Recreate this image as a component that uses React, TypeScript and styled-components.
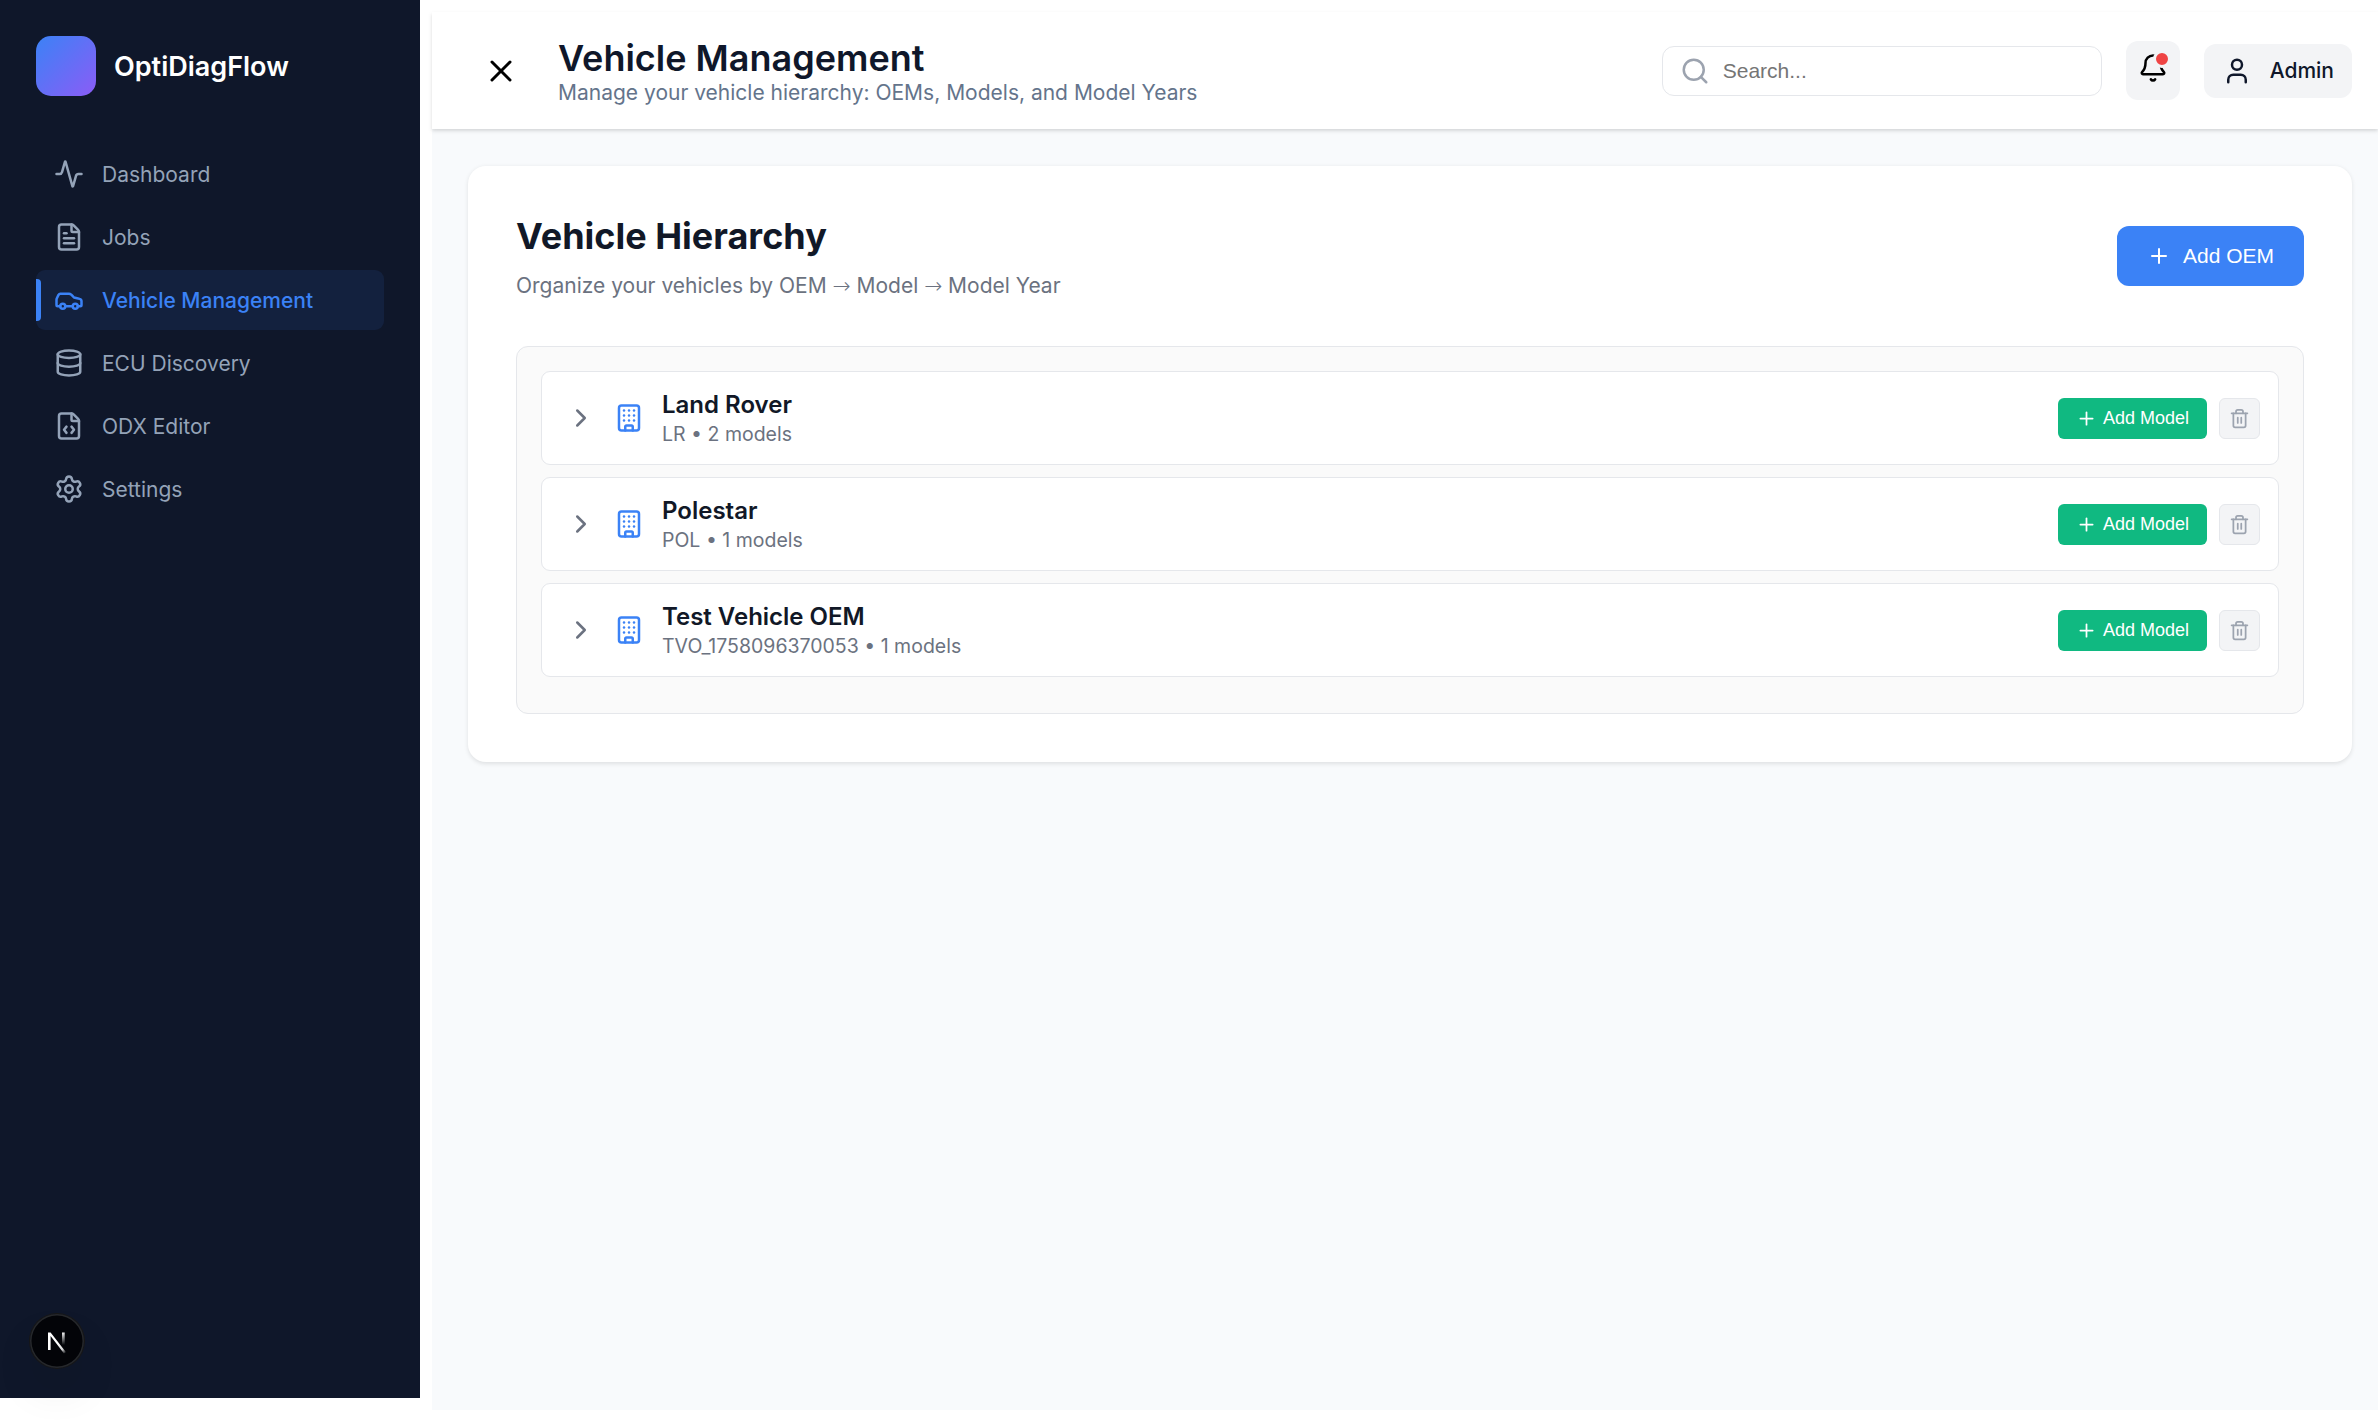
import React from "react";
import styled, { createGlobalStyle, css } from "styled-components";
import {
  Activity,
  Bell,
  Building,
  Car,
  ChevronRight,
  Database,
  FileCode,
  FileText,
  Plus,
  Search,
  Settings,
  Trash2,
  User,
  X,
} from "lucide-react";
import type { LucideIcon } from "lucide-react";

const sans = '"Inter", "Liberation Sans", sans-serif';
const control = '"Liberation Sans", Arial, sans-serif';

const GlobalStyle = createGlobalStyle`
  *, *::before, *::after { box-sizing: border-box; }
  body {
    margin: 0;
    padding: 12px 0 0;
    background: #fff;
    font-family: ${sans};
    overflow: hidden;
  }
  h1, h2, h3, p { margin: 0; }
  button { border: 0; margin: 0; cursor: pointer; }
  svg { flex-shrink: 0; }
`;

const Page = styled.div`
  display: flex;
  gap: 12px;
  height: 1398px;
  width: 2378px;
`;

const Sidebar = styled.aside`
  width: 420px;
  height: 1398px;
  flex-shrink: 0;
  margin-top: -12px;
  padding: 36px;
  background: #0f172a;
`;

const Brand = styled.div`
  display: flex;
  align-items: center;
  gap: 18px;
  margin-bottom: 48px;
`;

const BrandMark = styled.div`
  width: 60px;
  height: 60px;
  border-radius: 15px;
  background: linear-gradient(135deg, #3b82f6 0%, #8b5cf6 100%);
`;

const BrandName = styled.span`
  color: #fff;
  font-size: 27px;
  font-weight: 600;
  line-height: 33px;
`;

const Nav = styled.nav`
  display: flex;
  flex-direction: column;
  gap: 3px;
`;

const NavLabel = styled.span`
  padding-top: 2px;
`;

const NavItem = styled.a<{ $active?: boolean }>`
  position: relative;
  display: flex;
  align-items: center;
  gap: 18px;
  width: 348px;
  height: 60px;
  padding: 0 18px;
  border-radius: 9px;
  color: #94a3b8;
  font-size: 21px;
  line-height: 26px;
  ${({ $active }) =>
    $active &&
    css`
      background: rgba(59, 130, 246, 0.1);
      color: #3b82f6;
      font-weight: 500;
      &::before {
        content: "";
        position: absolute;
        left: 0;
        top: 9px;
        width: 5px;
        height: 42px;
        border-radius: 0 4px 4px 0;
        background: #3b82f6;
      }
    `}
`;

const Main = styled.main`
  display: flex;
  flex-direction: column;
  flex: 1;
  min-width: 0;
  background: #f8fafc;
`;

const Header = styled.header`
  display: flex;
  align-items: center;
  height: 117px;
  padding: 0 26px 0 36px;
  background: #fff;
  box-shadow: 0 1.5px 4.5px rgba(0, 0, 0, 0.1), 0 1.5px 3px rgba(0, 0, 0, 0.06);
  z-index: 1;
`;

const CloseButton = styled.button`
  display: flex;
  padding: 15px;
  margin-right: 24px;
  background: transparent;
  color: #000;
`;

const HeaderTitles = styled.div`
  flex: 1;
  padding-top: 2px;
`;

const PageTitle = styled.h1`
  color: #0f172a;
  font-size: 36px;
  font-weight: 600;
  line-height: 43px;
`;

const PageSubtitle = styled.p`
  color: #64748b;
  font-size: 21px;
  line-height: 26px;
`;

const HeaderTools = styled.div`
  display: flex;
  align-items: center;
  gap: 24px;
`;

const SearchBox = styled.label`
  display: flex;
  align-items: center;
  gap: 13px;
  width: 440px;
  height: 50px;
  padding: 0 17px;
  border: 1px solid #e5e7eb;
  border-radius: 12px;
  color: #9ca3af;
`;

const SearchInput = styled.input`
  flex: 1;
  min-width: 0;
  padding: 0;
  border: 0;
  outline: 0;
  background: transparent;
  font: 21px ${control};
  &::placeholder {
    color: #757575;
  }
`;

const BellButton = styled.button`
  position: relative;
  display: flex;
  width: 54px;
  height: 59px;
  padding: 12px;
  border-radius: 12px;
  background: #f3f4f6;
  color: #000;
`;

const BellDot = styled.span`
  position: absolute;
  top: 9px;
  right: 9px;
  width: 18px;
  height: 18px;
  border: 3px solid #f3f4f6;
  border-radius: 50%;
  background: #ef4444;
`;

const UserButton = styled.button`
  display: flex;
  align-items: center;
  gap: 18px;
  height: 54px;
  padding: 0 18px;
  border-radius: 12px;
  background: #f3f4f6;
  color: #0f172a;
  font: 500 21px ${sans};
`;

const Content = styled.div`
  padding: 37px 26px 36px 36px;
`;

const Card = styled.section`
  padding: 48px;
  border-radius: 18px;
  background: #fff;
  box-shadow: 0 1.5px 4.5px rgba(0, 0, 0, 0.1);
`;

const CardHeader = styled.div`
  display: flex;
  align-items: center;
  justify-content: space-between;
  height: 84px;
  margin-bottom: 48px;
`;

const CardTitle = styled.h2`
  color: #111827;
  font-size: 36px;
  font-weight: 700;
  line-height: 44px;
  margin-bottom: 15px;
`;

const CardSubtitle = styled.p`
  color: #6b7280;
  font-size: 21px;
  line-height: 26px;
`;

const Arrow = styled.span`
  font-family: "DejaVu Sans", sans-serif;
  font-size: 21.5px;
  font-weight: 200;
  line-height: 1;
`;

const PrimaryButton = styled.button`
  display: flex;
  align-items: center;
  gap: 12px;
  height: 60px;
  padding: 0 30px;
  border-radius: 12px;
  background: #3b82f6;
  color: #fff;
  font: 500 21px ${control};
`;

const Tree = styled.div`
  display: flex;
  flex-direction: column;
  gap: 12px;
  padding: 24px 24px 36px;
  border: 1px solid #e5e7eb;
  border-radius: 12px;
  background: #fafafa;
`;

const TreeRow = styled.div`
  display: flex;
  align-items: center;
  gap: 18px;
  height: 94px;
  padding: 0 18px 0 24px;
  border: 1px solid #e5e7eb;
  border-radius: 9px;
  background: #fff;
`;

const RowText = styled.div`
  flex: 1;
`;

const RowName = styled.h3`
  color: #111827;
  font-size: 24px;
  font-weight: 600;
  line-height: 29px;
`;

const RowMeta = styled.p`
  margin-top: 3px;
  color: #6b7280;
  font-size: 19.5px;
  line-height: 24px;
`;

const RowActions = styled.div`
  display: flex;
  gap: 12px;
`;

const AddModelButton = styled.button`
  display: flex;
  align-items: center;
  gap: 6px;
  height: 41px;
  padding: 0 18px;
  border-radius: 6px;
  background: #10b981;
  color: #fff;
  font: 18px ${control};
`;

const DeleteButton = styled.button`
  display: flex;
  align-items: center;
  justify-content: center;
  width: 41px;
  height: 41px;
  padding: 0;
  border: 1px solid #e5e7eb;
  border-radius: 6px;
  background: #f3f4f6;
  color: #9ca3af;
`;

const DevBadge = styled.div`
  position: fixed;
  left: 30px;
  top: 1314px;
  width: 54px;
  height: 54px;
  border-radius: 50%;
  background: rgba(0, 0, 0, 0.8);
  box-shadow: 0 0 0 1px #171717, inset 0 0 0 1.5px rgba(255, 255, 255, 0.14),
    0 24px 48px -12px rgba(0, 0, 0, 0.24);
  z-index: 2;
`;

const navItems: { label: string; icon: LucideIcon; active?: boolean }[] = [
  { label: "Dashboard", icon: Activity },
  { label: "Jobs", icon: FileText },
  { label: "Vehicle Management", icon: Car, active: true },
  { label: "ECU Discovery", icon: Database },
  { label: "ODX Editor", icon: FileCode },
  { label: "Settings", icon: Settings },
];

const oems = [
  { name: "Land Rover", code: "LR", models: 2 },
  { name: "Polestar", code: "POL", models: 1 },
  { name: "Test Vehicle OEM", code: "TVO_1758096370053", models: 1 },
];

function NextMark() {
  return (
    <svg width="54" height="54" viewBox="0 0 54 54" fill="none">
      <defs>
        <linearGradient id="diag" x1="28" y1="29" x2="36" y2="39" gradientUnits="userSpaceOnUse">
          <stop stopColor="#fff" />
          <stop offset="0.6" stopColor="#fff" stopOpacity="0.85" />
          <stop offset="1" stopColor="#fff" stopOpacity="0" />
        </linearGradient>
        <linearGradient id="stem" x1="33" y1="18" x2="33" y2="31" gradientUnits="userSpaceOnUse">
          <stop stopColor="#fff" />
          <stop offset="1" stopColor="#fff" stopOpacity="0" />
        </linearGradient>
      </defs>
      <path d="M18 36V18.5H20.6L36 38.2L34 39.6L20.6 22V36Z" fill="url(#diag)" />
      <rect x="32" y="18.5" width="2.7" height="13" fill="url(#stem)" />
    </svg>
  );
}

export default function App() {
  return (
    <>
      <GlobalStyle />
      <Page>
        <Sidebar>
          <Brand>
            <BrandMark />
            <BrandName>OptiDiagFlow</BrandName>
          </Brand>
          <Nav>
            {navItems.map(({ label, icon: Icon, active }) => (
              <NavItem key={label} $active={active}>
                <Icon size={30} />
                <NavLabel>{label}</NavLabel>
              </NavItem>
            ))}
          </Nav>
        </Sidebar>
        <Main>
          <Header>
            <CloseButton aria-label="Close menu">
              <X size={36} />
            </CloseButton>
            <HeaderTitles>
              <PageTitle>Vehicle Management</PageTitle>
              <PageSubtitle>Manage your vehicle hierarchy: OEMs, Models, and Model Years</PageSubtitle>
            </HeaderTitles>
            <HeaderTools>
              <SearchBox>
                <Search size={30} />
                <SearchInput placeholder="Search..." />
              </SearchBox>
              <BellButton aria-label="Notifications">
                <Bell size={30} />
                <BellDot />
              </BellButton>
              <UserButton>
                <User size={30} />
                Admin
              </UserButton>
            </HeaderTools>
          </Header>
          <Content>
            <Card>
              <CardHeader>
                <div>
                  <CardTitle>Vehicle Hierarchy</CardTitle>
                  <CardSubtitle>
                    Organize your vehicles by OEM <Arrow>→</Arrow> Model <Arrow>→</Arrow> Model Year
                  </CardSubtitle>
                </div>
                <PrimaryButton>
                  <Plus size={24} />
                  Add OEM
                </PrimaryButton>
              </CardHeader>
              <Tree>
                {oems.map((oem) => (
                  <TreeRow key={oem.code}>
                    <ChevronRight size={30} color="#6b7280" />
                    <Building size={30} color="#3b82f6" />
                    <RowText>
                      <RowName>{oem.name}</RowName>
                      <RowMeta>{`${oem.code} • ${oem.models} models`}</RowMeta>
                    </RowText>
                    <RowActions>
                      <AddModelButton>
                        <Plus size={21} />
                        Add Model
                      </AddModelButton>
                      <DeleteButton aria-label="Delete">
                        <Trash2 size={21} />
                      </DeleteButton>
                    </RowActions>
                  </TreeRow>
                ))}
              </Tree>
            </Card>
          </Content>
        </Main>
      </Page>
      <DevBadge>
        <NextMark />
      </DevBadge>
    </>
  );
}
